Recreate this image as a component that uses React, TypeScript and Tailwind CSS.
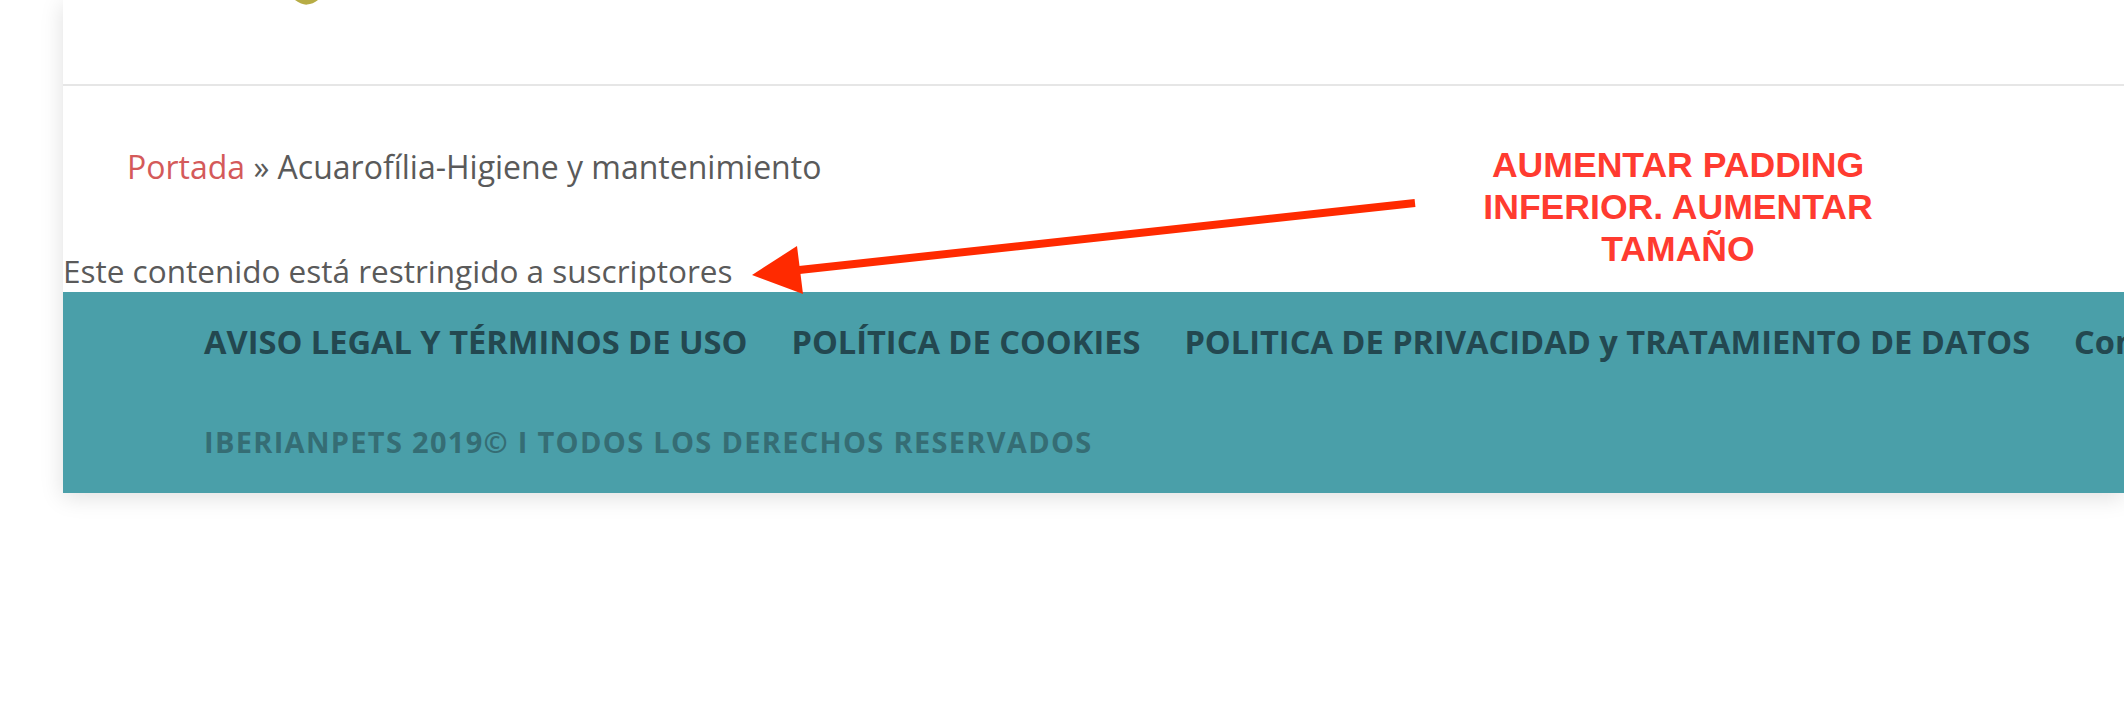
import React from 'react';

const navLinks = [
  'AVISO LEGAL Y TÉRMINOS DE USO',
  'POLÍTICA DE COOKIES',
  'POLITICA DE PRIVACIDAD y TRATAMIENTO DE DATOS',
  'Contacto',
];

const App: React.FC = () => {
  return (
    <div className="relative h-[726px] w-full overflow-hidden bg-white font-['Open_Sans',sans-serif]">
      <div className="ml-[63px] bg-white shadow-[0_4px_22px_rgba(0,0,0,0.13)]">
        {/* header (logo cut off at the top) */}
        <div className="relative h-[84px]">
          <svg className="absolute left-[230px] top-0" width="28" height="6" viewBox="0 0 28 6">
            <path d="M2 0 Q9 5 14 4.6 Q20 4 25 0 Z" fill="#b7ac45" />
          </svg>
        </div>
        <div className="h-[2px] bg-[#e6e6e6]" />

        <div className="pl-[64px] pt-[59px] text-[32px] leading-[44px] text-[#5a5a5a]">
          <a href="#" className="text-[#d45a5a]">Portada</a> » Acuarofília-Higiene y mantenimiento
        </div>

        <p className="mt-[61px] text-[31.5px] leading-[42px] text-[#5a5a5a]">
          Este contenido está restringido a suscriptores
        </p>

        <footer className="bg-[#4a9fa9] pb-[31px] pl-[141px] pt-[28px]">
          <nav className="flex gap-[44px] whitespace-nowrap text-[32.6px] font-bold leading-[44px] text-[#234850]">
            {navLinks.map((link) => (
              <a key={link} href="#">{link}</a>
            ))}
          </nav>
          <p className="mt-[58px] whitespace-nowrap text-[29px] font-bold leading-[40px] tracking-[1.3px] text-[#356d74]">
            IBERIANPETS 2019© I TODOS LOS DERECHOS RESERVADOS
          </p>
        </footer>
      </div>

      {/* review annotation */}
      <div className="absolute left-[1478px] top-[144px] w-[400px] text-center font-['Liberation_Sans',Arial,sans-serif] text-[35.6px] font-bold leading-[42px] text-[#ff3b30]">
        AUMENTAR PADDING
        <br />
        INFERIOR. AUMENTAR
        <br />
        TAMAÑO
      </div>
      <svg className="pointer-events-none absolute left-0 top-0" width="2124" height="726" viewBox="0 0 2124 726">
        <line x1="1415" y1="203" x2="790" y2="271" stroke="#ff2a00" strokeWidth="8" />
        <polygon points="752,275 797,246 803,294" fill="#ff2a00" />
      </svg>
    </div>
  );
};

export default App;
